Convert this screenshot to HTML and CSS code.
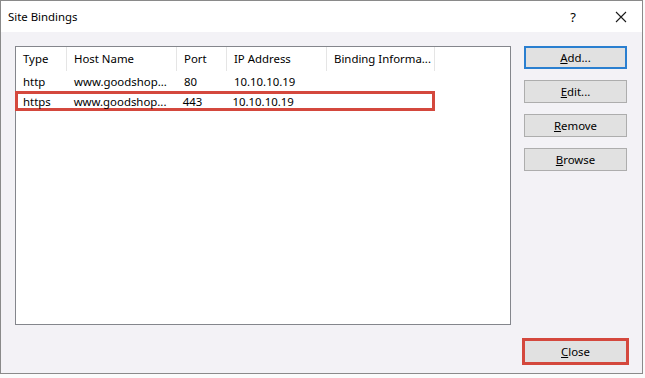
FILE: index.html
```html
<!DOCTYPE html>
<html lang="en">
<head>
    <meta charset="UTF-8">
    <title>Site Bindings</title>
    <link rel="stylesheet" href="styles.css">
</head>
<body>
    <div class="window">
        <div class="title-bar">
            <span class="title">Site Bindings</span>
            <span class="help">?</span>
            <svg class="close-x" width="12" height="12" viewBox="0 0 12 12">
                <path d="M1 1 L11 11 M11 1 L1 11" stroke="#1a1a1a" stroke-width="1.1" fill="none"/>
            </svg>
        </div>

        <div class="dialog">
            <div class="main">
                <div class="list">
                    <div class="row head">
                        <div class="col c-type">Type</div>
                        <div class="col c-host">Host Name</div>
                        <div class="col c-port">Port</div>
                        <div class="col c-ip">IP Address</div>
                        <div class="col c-info">Binding Informa...</div>
                    </div>
                    <div class="row">
                        <div class="col c-type">http</div>
                        <div class="col c-host">www.goodshop...</div>
                        <div class="col c-port">80</div>
                        <div class="col c-ip">10.10.10.19</div>
                        <div class="col c-info"></div>
                    </div>
                    <div class="row marked">
                        <div class="col c-type">https</div>
                        <div class="col c-host">www.goodshop...</div>
                        <div class="col c-port">443</div>
                        <div class="col c-ip">10.10.10.19</div>
                        <div class="col c-info"></div>
                    </div>
                </div>

                <div class="buttons">
                    <button class="btn default"><u>A</u>dd...</button>
                    <button class="btn"><u>E</u>dit...</button>
                    <button class="btn"><u>R</u>emove</button>
                    <button class="btn"><u>B</u>rowse</button>
                </div>
            </div>

            <div class="footer">
                <button class="btn marked-btn"><u>C</u>lose</button>
            </div>
        </div>
    </div>
</body>
</html>
```

FILE: styles.css
```css
body {
    margin: 0;
    font-family: "Noto Sans", "Open Sans", sans-serif;
    font-size: 11.4px;
    color: #000;
    background-color: #fbfbfb;
}

.window {
    width: 641px;
    height: 372px;
    border: 1px solid #8a8a8a;
    display: flex;
    flex-direction: column;
    background-color: #f3f2f6;
}

.title-bar {
    height: 31px;
    background-color: #fff;
    display: flex;
    align-items: center;
    padding-left: 7px;
}

.title {
    flex: 1;
}

.help {
    font-size: 13px;
    margin-right: 39px;
}

.close-x {
    margin-right: 15px;
}

.dialog {
    flex: 1;
    display: flex;
    flex-direction: column;
    padding: 14px 15px 0 14px;
}

.main {
    display: flex;
    gap: 13px;
}

.list {
    width: 495px;
    height: 277px;
    border: 1px solid #84868c;
    background-color: #fff;
}

.row {
    display: flex;
    height: 20px;
    align-items: center;
    box-sizing: border-box;
}

.row.head {
    height: 24px;
}

.col {
    box-sizing: border-box;
    padding-left: 7px;
    white-space: nowrap;
    overflow: hidden;
}

.head .col {
    height: 24px;
    line-height: 24px;
    border-right: 1px solid #e5e5e5;
}

.c-type { width: 51px; }
.c-host { width: 110px; }
.c-port { width: 50px; }
.c-ip { width: 100px; }
.c-info { width: 108px; }

.row.marked {
    width: 420px;
    margin-left: -1px;
    border: 3px solid #d4483d;
}

.row.marked .c-type {
    width: 49px;
    padding-left: 5px;
}

.buttons {
    display: flex;
    flex-direction: column;
    gap: 11px;
}

.btn {
    width: 103px;
    height: 23px;
    font-family: inherit;
    font-size: 11.4px;
    color: #000;
    background-color: #e1e1e1;
    border: 1px solid #adadad;
    padding: 0;
}

.btn.default {
    border: 2px solid #2a7fd0;
}

.footer {
    display: flex;
    justify-content: flex-end;
    margin-top: 13px;
}

.marked-btn {
    height: 27px;
    border: 3px solid #d4483d;
    width: 107px;
    margin-right: -2px;
}
```
